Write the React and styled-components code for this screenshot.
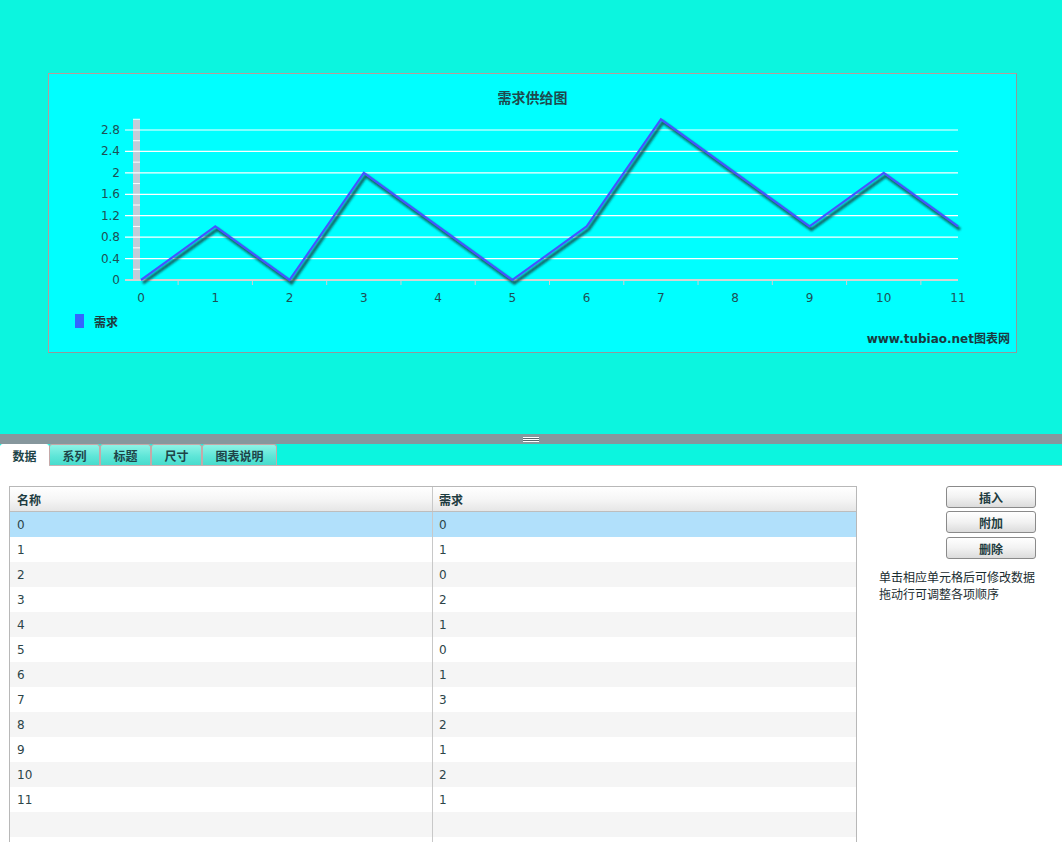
import React from "react";
import styled, { createGlobalStyle } from "styled-components";

const Global = createGlobalStyle`
  html, body { margin: 0; padding: 0; overflow: hidden; background: #ffffff; }
  body { font-family: "DejaVu Sans", "Noto Sans CJK SC", sans-serif; }
`;

const Page = styled.div`
  width: 1062px;
  height: 842px;
  display: flex;
  flex-direction: column;
  overflow: hidden;
`;

const Stage = styled.div`
  height: 434px;
  background: #0cf5df;
  padding: 73px 45px 0 48px;
  box-sizing: border-box;
`;

const ChartPanel = styled.div`
  width: 969px;
  height: 280px;
  box-sizing: border-box;
  border: 1px solid #b99a9a;
  border-right-color: #8f9a9a;
  border-bottom-color: #8f9a9a;
  background: #00ffff;
  display: flex;
  flex-direction: column;
`;

const ChartTitle = styled.div`
  height: 40px;
  line-height: 46px;
  text-align: center;
  font-family: "Noto Sans CJK SC", sans-serif;
  font-weight: 700;
  font-size: 14px;
  color: #1e4a4e;
`;

const Plot = styled.svg`
  display: block;
  width: 967px;
  height: 200px;
`;

const Legend = styled.div`
  height: 14px;
  display: flex;
  align-items: center;
  gap: 10px;
  padding-left: 26px;
  font-family: "Noto Sans CJK SC", sans-serif;
  font-weight: 700;
  font-size: 12px;
  color: #1e3c40;
`;

const Swatch = styled.span`
  width: 9px;
  height: 14px;
  background: ${(p) => p.color};
`;

const Watermark = styled.div`
  margin-top: 2px;
  height: 18px;
  line-height: 18px;
  text-align: right;
  padding-right: 6px;
  font-family: "DejaVu Sans", "Noto Sans CJK SC", sans-serif;
  font-weight: 700;
  font-size: 12px;
  color: #1a3a40;
`;

const Splitter = styled.div`
  height: 10px;
  background: #86979d;
  display: flex;
  justify-content: center;
  align-items: center;
`;

const Grip = styled.div`
  width: 16px;
  height: 5px;
  background: repeating-linear-gradient(
    to bottom,
    #ffffff 0px,
    #ffffff 1px,
    #56666c 1px,
    #56666c 2px
  );
`;

const TabBar = styled.div`
  height: 21px;
  background: #0cf5df;
  display: flex;
  align-items: flex-end;
  border-bottom: 1px solid #c8b4b4;
`;

const Tab = styled.div`
  width: ${(p) => p.w}px;
  height: 21px;
  box-sizing: border-box;
  display: flex;
  align-items: center;
  justify-content: center;
  font-family: "Noto Sans CJK SC", sans-serif;
  font-weight: 700;
  font-size: 12px;
  color: #1e4448;
  border: 1px solid #c5a8a8;
  border-bottom: none;
  border-radius: 3px 3px 0 0;
  background: ${(p) =>
    p.active
      ? "#ffffff"
      : "linear-gradient(to bottom, #8ef3e6 0%, #5fe6d8 55%, #47dccd 100%)"};
  ${(p) => (p.active ? "margin-bottom: -1px; height: 22px; border-color: #ffffff;" : "")}
`;

const Body = styled.div`
  flex: 1;
  background: #ffffff;
  display: flex;
  padding: 20px 0 0 9px;
  gap: 22px;
  min-height: 0;
`;

const Table = styled.div`
  width: 848px;
  box-sizing: border-box;
  border: 1px solid #b8b8b8;
  border-bottom: none;
  align-self: flex-start;
`;

const HeadRow = styled.div`
  display: grid;
  grid-template-columns: 423px 1fr;
  height: 24px;
  border-bottom: 1px solid #bdbdbd;
  background: linear-gradient(to bottom, #ffffff 0%, #f6f6f6 50%, #e6e6e6 100%);
`;

const HeadCell = styled.div`
  display: flex;
  align-items: center;
  padding-left: ${(p) => (p.first ? 7 : 6)}px;
  font-family: "Noto Sans CJK SC", sans-serif;
  font-weight: 700;
  font-size: 12px;
  color: #1e3c40;
  ${(p) => (p.first ? "border-right: 1px solid #c8c8c8;" : "")}
`;

const Row = styled.div`
  display: grid;
  grid-template-columns: 423px 1fr;
  height: 25px;
  background: ${(p) => (p.selected ? "#b1e0fb" : p.odd ? "#ffffff" : "#f5f5f5")};
`;

const Cell = styled.div`
  display: flex;
  align-items: center;
  padding-left: ${(p) => (p.first ? 7 : 6)}px;
  font-family: "DejaVu Sans", sans-serif;
  font-size: 12px;
  color: #2c4448;
  ${(p) => (p.first ? "border-right: 1px solid #c8c8c8;" : "")}
`;

const Side = styled.div`
  display: flex;
  flex-direction: column;
  width: 170px;
`;

const Buttons = styled.div`
  display: flex;
  flex-direction: column;
  gap: 3px;
  padding-left: 67px;
`;

const Button = styled.button`
  width: 90px;
  height: 22px;
  margin-top: ${(p) => p.mt || 0}px;
  box-sizing: border-box;
  border: 1px solid #8a8a8a;
  border-radius: 3px;
  background: linear-gradient(to bottom, #ffffff 0%, #f2f2f2 50%, #dcdcdc 100%);
  font-family: "Noto Sans CJK SC", sans-serif;
  font-weight: 700;
  font-size: 12px;
  color: #1e3c40;
  padding: 0;
  cursor: pointer;
`;

const Hint = styled.div`
  margin-top: 9px;
  font-family: "Noto Sans CJK SC", sans-serif;
  font-size: 12px;
  line-height: 17px;
  color: #1a2c30;
  white-space: nowrap;
`;

const data = [0, 1, 0, 2, 1, 0, 1, 3, 2, 1, 2, 1];
const X0 = 92;
const STEP = (909 - 92) / 11;
const Y0 = 166;
const UNIT = 150 / 2.8;
const xs = (i) => X0 + i * STEP;
const ys = (v) => Y0 - v * UNIT;

function Chart() {
  const majors = [0.4, 0.8, 1.2, 1.6, 2, 2.4, 2.8];
  const minors = [0.2, 0.6, 1.0, 1.4, 1.8, 2.2, 2.6, 3.0];
  const pts = data.map((v, i) => `${xs(i)},${ys(v)}`).join(" ");
  return (
    <Plot viewBox="0 0 967 200">
      <defs>
        <filter id="blur" x="-5%" y="-5%" width="110%" height="110%">
          <feGaussianBlur stdDeviation="1" />
        </filter>
      </defs>
      <rect x="84" y="6" width="7" height="160" fill="#c2ccd8" />
      {minors.map((v) => (
        <line key={v} x1="84" x2="91" y1={ys(v)} y2={ys(v)} stroke="#ffffff" strokeWidth="1" />
      ))}
      {majors.map((v) => (
        <line key={v} x1="76" x2="909" y1={ys(v)} y2={ys(v)} stroke="#ffffff" strokeWidth="1.2" />
      ))}
      <line x1="76" x2="909" y1={Y0} y2={Y0} stroke="#d4d4d4" strokeWidth="2" />
      {Array.from({ length: 11 }, (_, i) => (
        <line
          key={i}
          x1={xs(i + 0.5)}
          x2={xs(i + 0.5)}
          y1={Y0 + 1}
          y2={Y0 + 5}
          stroke="#d0d0d0"
          strokeWidth="1"
        />
      ))}
      {[0, ...majors].map((v) => (
        <text
          key={v}
          x="71"
          y={ys(v) + 4}
          textAnchor="end"
          fontFamily="DejaVu Sans, sans-serif"
          fontSize="12"
          fill="#1e5055"
        >
          {v}
        </text>
      ))}
      {data.map((_, i) => (
        <text
          key={i}
          x={xs(i)}
          y="188"
          textAnchor="middle"
          fontFamily="DejaVu Sans, sans-serif"
          fontSize="12"
          fill="#1e5055"
        >
          {i}
        </text>
      ))}
      <polyline
        points={pts}
        transform="translate(2,3)"
        fill="none"
        stroke="#144848"
        strokeOpacity="0.85"
        strokeWidth="3.2"
        filter="url(#blur)"
      />
      <polyline points={pts} fill="none" stroke="#4455ff" strokeWidth="2.2" strokeLinejoin="miter" />
    </Plot>
  );
}

const tabs = [
  { label: "数据", w: 49, active: true },
  { label: "系列", w: 51 },
  { label: "标题", w: 51 },
  { label: "尺寸", w: 51 },
  { label: "图表说明", w: 75 },
];

export default function App() {
  const rows = [...data.map((v, i) => [String(i), String(v)]), ["", ""], ["", ""]];
  return (
    <>
      <Global />
      <Page>
        <Stage>
          <ChartPanel>
            <ChartTitle>需求供给图</ChartTitle>
            <Chart />
            <Legend>
              <Swatch color="#3366ff" />
              需求
            </Legend>
            <Watermark>www.tubiao.net图表网</Watermark>
          </ChartPanel>
        </Stage>
        <Splitter>
          <Grip />
        </Splitter>
        <TabBar>
          {tabs.map((t) => (
            <Tab key={t.label} w={t.w} active={t.active}>
              {t.label}
            </Tab>
          ))}
        </TabBar>
        <Body>
          <Table>
            <HeadRow>
              <HeadCell first>名称</HeadCell>
              <HeadCell>需求</HeadCell>
            </HeadRow>
            {rows.map((r, i) => (
              <Row key={i} selected={i === 0} odd={i % 2 === 1}>
                <Cell first>{r[0]}</Cell>
                <Cell>{r[1]}</Cell>
              </Row>
            ))}
          </Table>
          <Side>
            <Buttons>
              <Button>插入</Button>
              <Button>附加</Button>
              <Button mt={1}>删除</Button>
            </Buttons>
            <Hint>
              单击相应单元格后可修改数据
              <br />
              拖动行可调整各项顺序
            </Hint>
          </Side>
        </Body>
      </Page>
    </>
  );
}
